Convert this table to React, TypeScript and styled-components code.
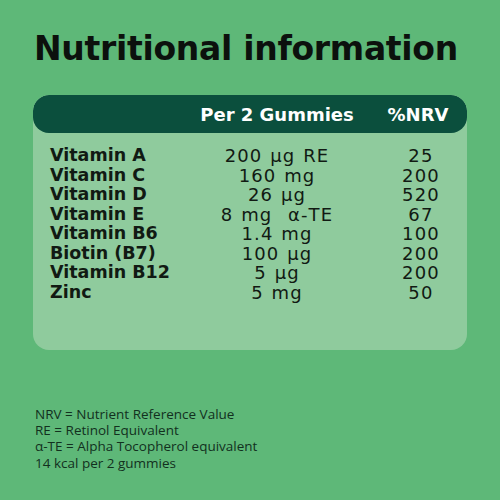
import styled, { createGlobalStyle } from 'styled-components'

const GlobalStyle = createGlobalStyle`
  html, body {
    margin: 0;
    padding: 0;
  }
  body {
    background: #5eb878;
    font-family: 'DejaVu Sans', 'Open Sans', sans-serif;
  }
`

const Page = styled.div`
  width: 500px;
  height: 500px;
  box-sizing: border-box;
  padding: 29px 33px 0 33px;
  background: #5eb878;
  display: flex;
  flex-direction: column;
`

const Title = styled.h1`
  margin: 0 0 0 1px;
  font-family: 'DejaVu Sans', sans-serif;
  font-weight: 700;
  font-size: 33px;
  line-height: 40px;
  letter-spacing: -0.3px;
  color: #0c110d;
`

const Card = styled.div`
  margin-top: 26px;
  width: 434px;
  height: 255px;
  background: #8fcb9d;
  border-radius: 16px;
  overflow: hidden;
`

const Cols = styled.div`
  display: grid;
  grid-template-columns: 160px 166px 1fr;
  align-items: center;
`

const HeaderBar = styled(Cols)`
  height: 38px;
  background: #0b4f3d;
  border-radius: 16px;
  color: #ffffff;
  font-weight: 700;
  font-size: 18px;
`

const HeadCell = styled.div<{ $offset?: number }>`
  text-align: center;
  white-space: nowrap;
  transform: translateX(${(p) => p.$offset ?? 0}px);
`

const Rows = styled.div`
  padding: 13px 0 0 0;
  display: flex;
  flex-direction: column;
`

const Row = styled(Cols)`
  height: 19.5px;
  line-height: 19.5px;
  font-size: 18px;
  color: #111a13;
`

const Name = styled.div`
  padding-left: 17px;
  font-size: 17.5px;
  font-weight: 700;
  white-space: nowrap;
`

const Amount = styled.div`
  text-align: center;
  white-space: pre;
  letter-spacing: 1.1px;
  word-spacing: 1px;
  transform: translateX(1px);
`

const Nrv = styled.div`
  text-align: center;
  letter-spacing: 1.2px;
  transform: translateX(8px);
`

const Notes = styled.div`
  margin-top: 56px;
  padding-left: 2px;
  font-family: 'Open Sans', sans-serif;
  font-size: 13.5px;
  line-height: 16.2px;
  color: #12301e;
`

const rows = [
  ['Vitamin A', '200 µg RE', '25'],
  ['Vitamin C', '160 mg', '200'],
  ['Vitamin D', '26 µg', '520'],
  ['Vitamin E', '8 mg  α-TE', '67'],
  ['Vitamin B6', '1.4 mg', '100'],
  ['Biotin (B7)', '100 µg', '200'],
  ['Vitamin B12', '5 µg', '200'],
  ['Zinc', '5 mg', '50'],
]

const notes = [
  'NRV = Nutrient Reference Value',
  'RE = Retinol Equivalent',
  'α-TE = Alpha Tocopherol equivalent',
  '14 kcal per 2 gummies',
]

export default function App(): JSX.Element {
  return (
    <Page>
      <GlobalStyle />
      <Title>Nutritional information</Title>
      <Card>
        <HeaderBar>
          <div />
          <HeadCell $offset={1}>Per 2 Gummies</HeadCell>
          <HeadCell $offset={5}>%NRV</HeadCell>
        </HeaderBar>
        <Rows>
          {rows.map(([name, amount, nrv]) => (
            <Row key={name}>
              <Name>{name}</Name>
              <Amount>{amount}</Amount>
              <Nrv>{nrv}</Nrv>
            </Row>
          ))}
        </Rows>
      </Card>
      <Notes>
        {notes.map((n) => (
          <div key={n}>{n}</div>
        ))}
      </Notes>
    </Page>
  )
}
